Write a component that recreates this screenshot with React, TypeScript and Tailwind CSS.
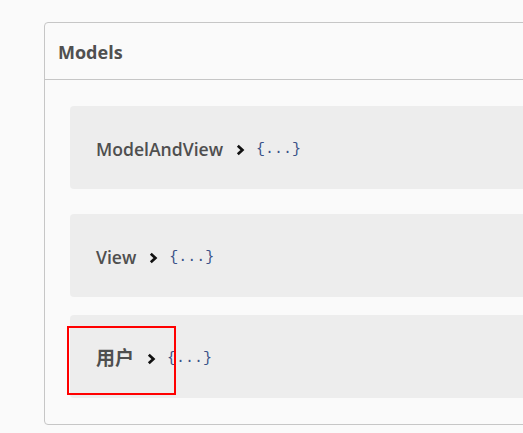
import React from "react";

const Chevron = () => (
  <svg width="10" height="12" viewBox="0 0 10 12" className="shrink-0">
    <polyline points="2.8,1.8 7.4,6 2.8,10.2" fill="none" stroke="#111" strokeWidth="2.7" strokeLinecap="butt" strokeLinejoin="miter" />
  </svg>
);

const Card = ({ name, className, nameClass }: { name: string; className?: string; nameClass?: string }) => (
  <div className={"h-[83px] rounded-[4px] bg-[#ededed] flex items-center pl-[26px] pt-[4px] " + (className ?? "")}>
    <span
      className={"text-[#4f4f4f] font-semibold leading-none " + (nameClass ?? "text-[18px]")}
      style={{ fontFamily: '"Open Sans", "Noto Sans CJK SC", sans-serif' }}
    >
      {name}
    </span>
    <span className="ml-[12px] mr-[11px] flex items-center">
      <Chevron />
    </span>
    <span
      className="text-[15px] text-[#3a5288] leading-none"
      style={{ fontFamily: '"Liberation Mono", monospace' }}
    >
      {"{...}"}
    </span>
  </div>
);

export default function App() {
  return (
    <div className="relative w-[523px] h-[433px] overflow-hidden bg-[#fafafa]">
      <div className="pt-[22px] pl-[44px]">
        <div className="w-[560px] border border-[#c6c6c6] rounded-[4px] bg-[#fafafa]">
          <div className="h-[57px] border-b border-[#c6c6c6] flex items-center pl-[13px] pt-[2px]">
            <span
              className="text-[18px] font-bold text-[#505050]"
              style={{ fontFamily: '"Open Sans", sans-serif' }}
            >
              Models
            </span>
          </div>
          <div className="pl-[25px] pt-[26px] pb-[26px]">
            <Card name="ModelAndView" nameClass="text-[17.6px]" />
            <Card name="View" className="mt-[25px]" nameClass="text-[17.6px]" />
            <Card name="用户" className="mt-[18px]" nameClass="text-[19px]" />
          </div>
        </div>
      </div>
      <div className="absolute left-[67px] top-[326px] w-[109px] h-[69px] border-2 border-[#ff0000]" />
    </div>
  );
}
